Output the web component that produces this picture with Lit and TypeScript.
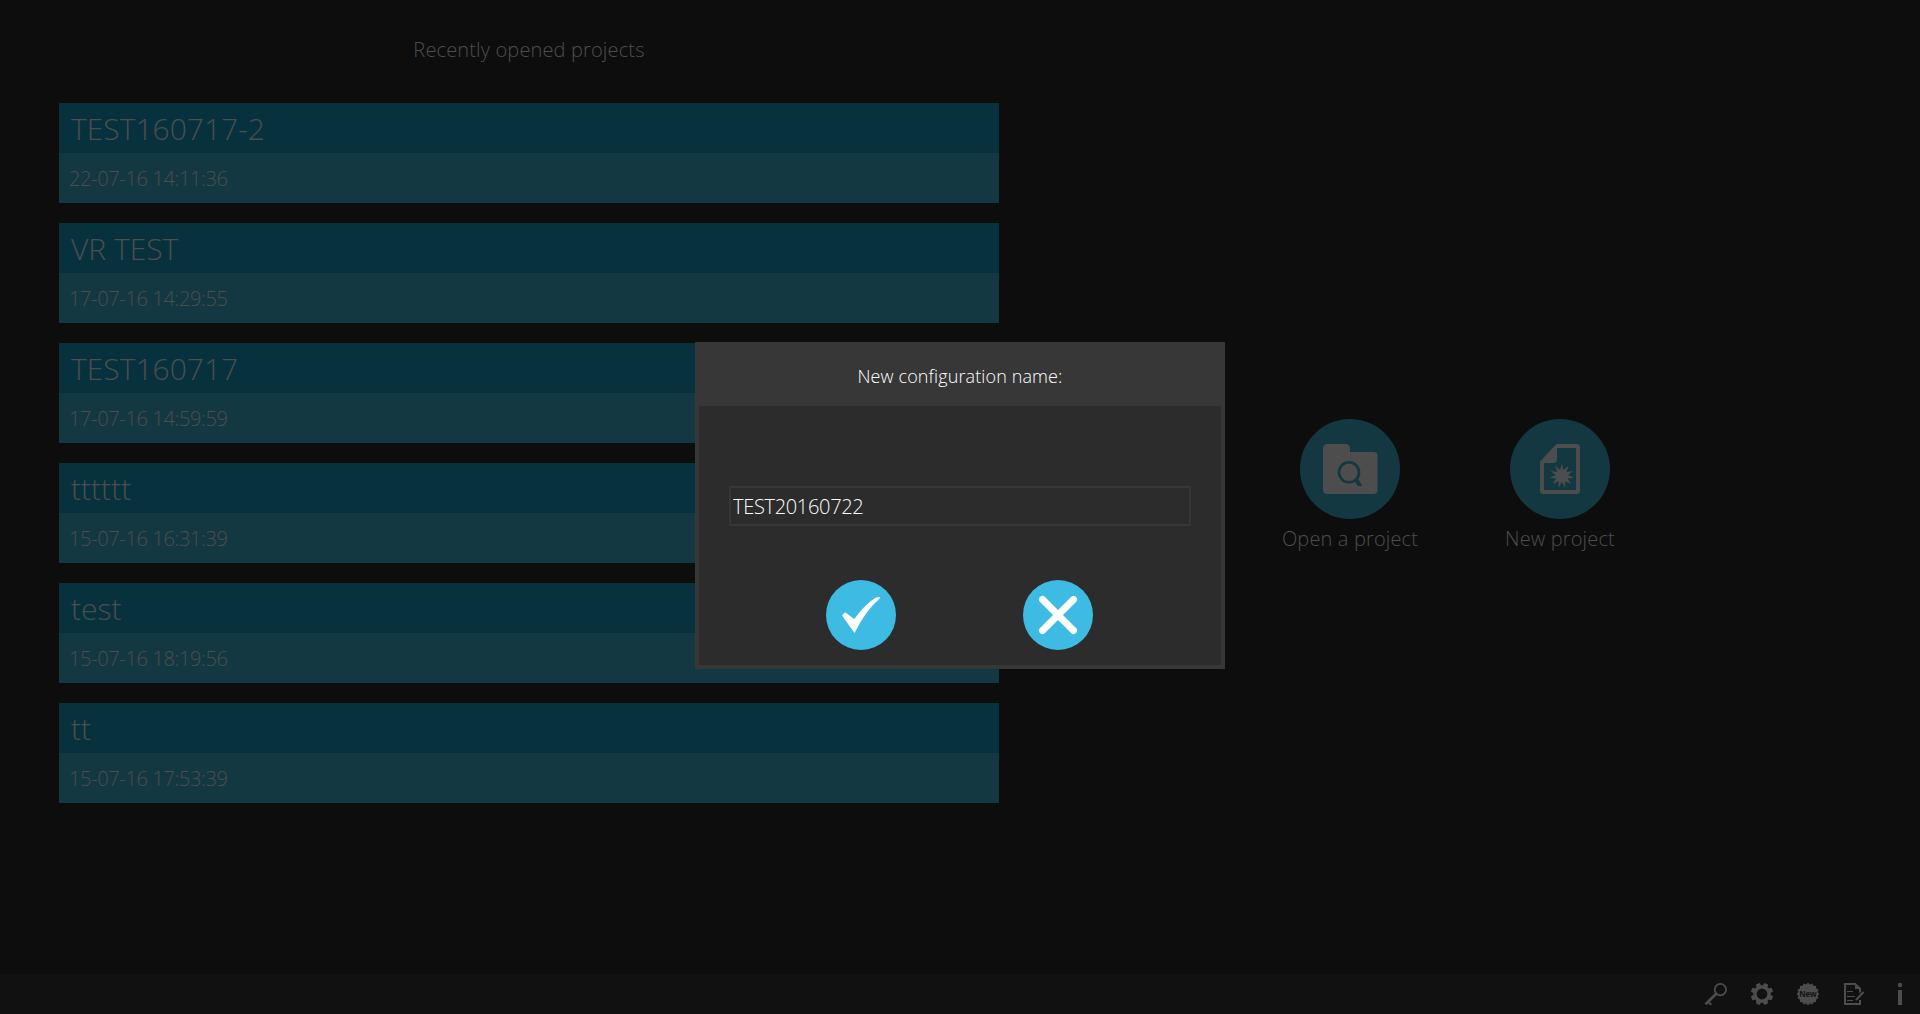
import { LitElement, html, css, svg } from "lit";
import { customElement } from "lit/decorators.js";

interface Project { name: string; opened: string; }

const PROJECTS: Project[] = [
  { name: "TEST160717-2", opened: "22-07-16 14:11:36" },
  { name: "VR TEST", opened: "17-07-16 14:29:55" },
  { name: "TEST160717", opened: "17-07-16 14:59:59" },
  { name: "tttttt", opened: "15-07-16 16:31:39" },
  { name: "test", opened: "15-07-16 18:19:56" },
  { name: "tt", opened: "15-07-16 17:53:39" },
];

/** Polygon points alternating between an outer and an inner radius. */
function star(cx: number, cy: number, outer: number, inner: number, spikes: number, turn = 0): string {
  const pts: string[] = [];
  for (let i = 0; i < spikes * 2; i++) {
    const r = i % 2 ? inner : outer;
    const a = (Math.PI * i) / spikes - Math.PI / 2 + turn;
    pts.push(`${(cx + r * Math.cos(a)).toFixed(2)},${(cy + r * Math.sin(a)).toFixed(2)}`);
  }
  return pts.join(" ");
}

const GEAR_TEETH = [22.5, 67.5, 112.5, 157.5, 202.5, 247.5, 292.5, 337.5];

const openIcon = html`<svg width="100" height="100" viewBox="0 0 100 100">
  <path fill="#4d4d4d" d="M27.500 25H45.500Q50 25 50 29.500V33H73.500Q77.500 33 77.500 37V71Q77.500 75 73.500 75H27Q23 75 23 71V29.500Q23 25 27.500 25Z" />
  <circle cx="49" cy="53.300" r="10" fill="none" stroke="#143842" stroke-width="2.600" />
  <path fill="#143842" d="M54.500 62.500L58 59.800L62.300 67H57.800Z" />
</svg>`;

const newIcon = html`<svg width="100" height="100" viewBox="0 0 100 100">
  <path fill="#4d4d4d" fill-rule="evenodd" d="M46.500 25H66.500Q70 25 70 28.500V71.500Q70 75 66.500 75H33.500Q30 75 30 71.500V42.500ZM47 29V40Q47 44 43 44H34V71H66V29Z" />
  <polygon fill="#4d4d4d" points=${star(51.8, 57, 12.2, 6.2, 11, 0)} />
</svg>`;

@customElement("app-root")
export class AppRoot extends LitElement {
  static styles = css`
    :host {
      display: block;
      width: 100%;
      height: 100vh;
      overflow: hidden;
      position: relative;
      background: #0d0d0d;
      color: #4d4d4d;
      font-family: "Open Sans", sans-serif;
      font-weight: 300;
      font-size: 20px;
    }
    * { box-sizing: border-box; }
    svg { display: block; }
    .page { display: flex; flex-direction: column; height: 100%; }
    .main { flex: 1; display: flex; min-height: 0; }
    .recent { width: 940px; margin-left: 59px; flex: none; }
    .heading { height: 103px; line-height: 99px; text-align: center; font-size: 20px; letter-spacing: 0.15px; }
    .list { display: flex; flex-direction: column; gap: 20px; }
    .name { height: 50px; line-height: 50px; padding: 1px 0 0 12px; font-size: 30px; background: #07323d; }
    .date { height: 50px; line-height: 50px; padding: 1px 0 0 10px; letter-spacing: -0.35px; background: #143842; }
    .actions { flex: 1; display: flex; align-items: flex-start; padding: 419px 0 0 271px; gap: 50px; }
    .action { width: 160px; display: flex; flex-direction: column; align-items: center; gap: 6px; letter-spacing: 0.15px; }
    .disc { width: 100px; height: 100px; border-radius: 50%; background: #143842; }
    .footer { height: 40px; background: #111111; display: flex; align-items: center; justify-content: flex-end; gap: 16px; padding-right: 5px; flex: none; }
    .dialog {
      position: absolute; left: 695px; top: 342px; width: 530px; height: 327px;
      border: 4px solid #373737; background: #2c2c2c; color: #ffffff;
      display: flex; flex-direction: column;
    }
    .title { height: 60px; line-height: 60px; background: #373737; text-align: center; font-size: 18px; letter-spacing: 0.11px; }
    .field {
      margin: 80px 30px 0; height: 40px; border: 2px solid #373737; padding: 0 2px;
      background: transparent; color: inherit; font: inherit; line-height: 36px; letter-spacing: -0.32px;
    }
    .buttons { display: flex; justify-content: center; gap: 127px; margin-top: 54px; padding-right: 1px; }
    .round { width: 70px; height: 70px; padding: 0; border: 0; border-radius: 50%; background: #3dbbe2; }
  `;

  render() {
    return html`
      <div class="page">
        <div class="main">
          <section class="recent">
            <div class="heading">Recently opened projects</div>
            <div class="list">
              ${PROJECTS.map((p) => html`<article>
                <div class="name">${p.name}</div>
                <div class="date">${p.opened}</div>
              </article>`)}
            </div>
          </section>
          <nav class="actions">
            <div class="action"><div class="disc">${openIcon}</div><span>Open a project</span></div>
            <div class="action"><div class="disc">${newIcon}</div><span>New project</span></div>
          </nav>
        </div>
        <footer class="footer">
          <svg width="30" height="30" viewBox="0 0 30 30" fill="none" stroke="#4d4d4d">
            <circle cx="19.400" cy="10.600" r="5.700" stroke-width="1.800" />
            <path stroke-width="2.600" d="M15.500 14.500L4.500 25.300" />
            <path stroke-width="2" d="M7 22.500L10.300 25.800" />
          </svg>
          <svg width="30" height="30" viewBox="0 0 30 30">
            <circle cx="15" cy="15" r="7.100" fill="none" stroke="#4d4d4d" stroke-width="3.400" />
            ${GEAR_TEETH.map((a) => svg`<path fill="#4d4d4d" transform="rotate(${a} 15 15)" d="M12.300 8L13 3.800H17L17.700 8Z" />`)}
          </svg>
          <svg width="30" height="30" viewBox="0 0 30 30">
            <polygon fill="#4d4d4d" points=${star(15, 15, 11.3, 9.8, 16)} />
            <text x="15" y="17.800" text-anchor="middle" font-family="Liberation Sans" font-weight="700" font-size="8.300" fill="#111111">New</text>
          </svg>
          <svg width="30" height="30" viewBox="0 0 30 30" fill="none" stroke="#4d4d4d">
            <path stroke-width="2" d="M21 15V9.500L16 5H6V25H21V21" />
            <path fill="#4d4d4d" stroke="none" d="M16 4V10H22Z" />
            <path stroke-width="1" d="M8 12.500H14M8 17.500H16M8 21.500H14" />
            <path stroke="#111111" stroke-width="4.600" d="M24.500 13L17 21" />
            <path stroke-width="2.200" d="M24.500 13L17 21" />
          </svg>
          <svg width="30" height="30" viewBox="0 0 30 30" fill="#4d4d4d">
            <circle cx="15" cy="6" r="2.200" /><path d="M13 11H17V26H13Z" />
          </svg>
        </footer>
      </div>
      <div class="dialog">
        <div class="title">New configuration name:</div>
        <input class="field" type="text" .value=${"TEST20160722"} />
        <div class="buttons">
          <button class="round" aria-label="OK"><svg width="70" height="70" viewBox="0 0 70 70">
            <path fill="#fff" d="M16 35.500L19 32.300L28.300 39Q39 24 50 17.500L54.300 17L53 19.200Q40 30 28.500 53Z" />
          </svg></button>
          <button class="round" aria-label="Cancel"><svg width="70" height="70" viewBox="0 0 70 70">
            <path stroke="#fff" stroke-width="7" stroke-linecap="round" d="M19.500 19.500L50.500 50.500M50.500 19.500L19.500 50.500" />
          </svg></button>
        </div>
      </div>
    `;
  }
}
